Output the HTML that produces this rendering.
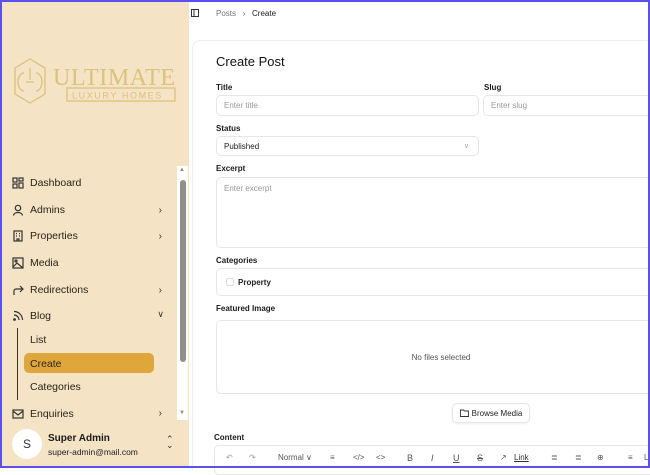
<!DOCTYPE html>
<html><head><style>
*{box-sizing:border-box;margin:0;padding:0}
body{width:650px;height:468px;overflow:hidden;font-family:"Liberation Sans",sans-serif;background:#fff;position:relative}
.frame{position:absolute;inset:0;border:2px solid #5b4ff0;pointer-events:none;z-index:10}
.side{position:absolute;left:0;top:0;width:189px;height:468px;background:#f4e3c5}
.item{position:absolute;left:12px;font-size:10.5px;color:#2b2418;display:flex;align-items:center;height:20px}
.item svg{margin-right:6px}
.chev{position:absolute;right:14px;font-size:10px;color:#333}
.sub{position:absolute;left:30px;font-size:10.5px;color:#2b2418}
.sb{position:absolute;left:177px;top:166px;width:11px;height:254px;background:#fff}
.thumb{position:absolute;left:180px;top:180px;width:6px;height:182px;background:#8f8f8f;border-radius:3px}
.lbl{position:absolute;font-size:8px;font-weight:bold;color:#1a1a1a}
.inp{position:absolute;border:1px solid #e6e6e6;border-radius:5px;font-size:8px;color:#999;padding-left:7px;display:flex;align-items:center}
.tb{position:absolute;top:453px;font-size:8px;color:#555}
</style></head><body>
<div class="side">
 <svg style="position:absolute;left:12px;top:56px" width="166" height="50" viewBox="0 0 166 50" fill="none" stroke="#dcc27c" stroke-width="1.3">
  <polygon points="18,3 33,12 33,38 18,47 3,38 3,12"/>
  <path d="M12,17 a6,9 0 0 0 0,18 M24,17 a6,9 0 0 1 0,18 M14,26 h8 M18,12 v12"/>
  <text x="41" y="29" font-family="Liberation Serif" font-size="24" textLength="122" fill="#dcc27c" stroke="none">ULTIMATE</text>
  <rect x="55" y="32" width="108" height="13"/>
  <text x="60" y="42.5" font-family="Liberation Sans" font-size="9" letter-spacing="1.6" fill="#dcc27c" stroke="none">LUXURY HOMES</text>
 </svg>
 <div class="item" style="top:173px"><svg width="12" height="12" viewBox="0 0 12 12" fill="none" stroke="#333" stroke-width="1.2"><rect x="1" y="1" width="4" height="4"/><rect x="7" y="1" width="4" height="3"/><rect x="1" y="7" width="4" height="4"/><rect x="7" y="6" width="4" height="5"/></svg>Dashboard</div>
 <div class="item" style="top:200px"><svg width="12" height="12" viewBox="0 0 12 12" fill="none" stroke="#333" stroke-width="1.2"><circle cx="6" cy="4" r="2.7"/><path d="M1.5,11.5 c0.5-4 8.5-4 9,0"/></svg>Admins</div>
 <div class="item" style="top:226px"><svg width="12" height="12" viewBox="0 0 12 12" fill="none" stroke="#333" stroke-width="1.2"><rect x="2" y="1" width="8" height="10"/><path d="M4,3.5h1M7,3.5h1M4,6h1M7,6h1M5,11V9h2v2"/></svg>Properties</div>
 <div class="item" style="top:253px"><svg width="12" height="12" viewBox="0 0 12 12" fill="none" stroke="#333" stroke-width="1.2"><rect x="1" y="1" width="10" height="10"/><circle cx="4" cy="4" r="1"/><path d="M1,10 l4-4 6,5"/></svg>Media</div>
 <div class="item" style="top:280px"><svg width="12" height="12" viewBox="0 0 12 12" fill="none" stroke="#333" stroke-width="1.2"><path d="M2,11V7a2,2 0 0 1 2-2h7M8,2l3,3-3,3"/></svg>Redirections</div>
 <div class="item" style="top:306px"><svg width="12" height="12" viewBox="0 0 12 12" fill="none" stroke="#333" stroke-width="1.2"><path d="M2,1.5a8.5,8.5 0 0 1 8.5,8.5M2,5a5,5 0 0 1 5,5"/><circle cx="2.5" cy="9.5" r="0.8" fill="#333"/></svg>Blog</div>
 <div class="chev" style="top:205px;right:27px">&#x203A;</div>
 <div class="chev" style="top:231px;right:27px">&#x203A;</div>
 <div class="chev" style="top:285px;right:27px">&#x203A;</div>
 <div class="chev" style="top:309px;right:25px;font-size:9px">&#x2228;</div>
 <div class="chev" style="top:408px;right:27px">&#x203A;</div>
 <div style="position:absolute;left:17px;top:328px;width:1px;height:72px;background:#3a3224"></div>
 <div class="sub" style="top:334px">List</div>
 <div style="position:absolute;left:24px;top:353px;width:130px;height:20px;background:#dfa63c;border-radius:5px"></div>
 <div class="sub" style="top:358px">Create</div>
 <div class="sub" style="top:381px">Categories</div>
 <div class="item" style="top:404px"><svg width="12" height="12" viewBox="0 0 12 12" fill="none" stroke="#333" stroke-width="1.2"><rect x="1" y="2" width="10" height="8"/><path d="M1,3l5,4 5-4"/></svg>Enquiries</div>
 <div class="sb"></div><div class="thumb"></div>
 <div style="position:absolute;left:179px;top:167px;font-size:6px;color:#888">&#9650;</div>
 <div style="position:absolute;left:179px;top:410px;font-size:6px;color:#888">&#9660;</div>
 <div style="position:absolute;left:12px;top:429px;width:30px;height:30px;border-radius:50%;background:#fff;font-size:12px;color:#333;text-align:center;line-height:30px">S</div>
 <div style="position:absolute;left:48px;top:433px;font-size:10px;font-weight:bold;color:#1a1a1a">Super Admin</div>
 <div style="position:absolute;left:48px;top:447px;font-size:8.5px;color:#222">super-admin@mail.com</div>
 <div style="position:absolute;left:166px;top:436px;font-size:9px;color:#333;line-height:6px">&#x2303;<br>&#x2304;</div>
</div>
<svg style="position:absolute;left:191px;top:9px" width="8" height="8" viewBox="0 0 8 8" fill="none" stroke="#333" stroke-width="1"><rect x="0.5" y="0.5" width="7" height="7"/><path d="M3,0.5v7"/></svg>
<div style="position:absolute;left:216px;top:9px;font-size:8px;color:#777">Posts &nbsp;&nbsp;<span style="color:#555">&#x203A;</span>&nbsp;&nbsp; <span style="color:#222">Create</span></div>
<div style="position:absolute;left:192px;top:40px;width:460px;height:430px;border-top:1px solid #eee;border-left:1px solid #eee;border-top-left-radius:8px"></div>
<div style="position:absolute;left:216px;top:54px;font-size:13px;color:#111">Create Post</div>
<div class="lbl" style="left:216px;top:83px">Title</div>
<div class="lbl" style="left:484px;top:83px">Slug</div>
<div class="inp" style="left:216px;top:95px;width:263px;height:21px">Enter title</div>
<div class="inp" style="left:483px;top:95px;width:180px;height:21px">Enter slug</div>
<div class="lbl" style="left:216px;top:124px">Status</div>
<div class="inp" style="left:216px;top:136px;width:263px;height:20px;color:#222">Published<span style="position:absolute;right:9px;color:#aaa;font-size:7px">&#x2228;</span></div>
<div class="lbl" style="left:216px;top:164px">Excerpt</div>
<div class="inp" style="left:216px;top:177px;width:450px;height:71px;align-items:flex-start;padding-top:6px">Enter excerpt</div>
<div class="lbl" style="left:216px;top:256px">Categories</div>
<div class="inp" style="left:216px;top:268px;width:450px;height:28px;color:#222;padding-left:9px"><span style="display:inline-block;width:8px;height:8px;border:1px solid #ddd;border-radius:2px;margin-right:4px"></span><b style="font-size:8px">Property</b></div>
<div class="lbl" style="left:216px;top:304px">Featured Image</div>
<div class="inp" style="left:216px;top:320px;width:450px;height:74px;justify-content:center;color:#555;padding:0">No files selected</div>
<div class="inp" style="left:452px;top:403px;width:78px;height:20px;color:#222;font-size:8px;justify-content:center;padding:0;box-shadow:0 1px 2px #eee"><svg width="9" height="8" viewBox="0 0 9 8" fill="none" stroke="#333" stroke-width="0.9" style="margin-right:3px"><path d="M0.5,1h3l1,1h4v5.5h-8z"/></svg>Browse Media</div>
<div class="lbl" style="left:214px;top:433px">Content</div>
<div class="inp" style="left:214px;top:445px;width:450px;height:30px"></div>
<span class="tb" style="left:226px;color:#999">&#x21B6;</span>
<span class="tb" style="left:249px;color:#999">&#x21B7;</span>
<span class="tb" style="left:278px">Normal &#x2228;</span>
<span class="tb" style="left:330px">&#x2261;</span>
<span class="tb" style="left:353px">&lt;/&gt;</span>
<span class="tb" style="left:376px">&lt;&gt;</span>
<span class="tb" style="left:407px;font-size:9px">B</span>
<span class="tb" style="left:431px;font-size:9px"><i>I</i></span>
<span class="tb" style="left:453px;font-size:9px"><u>U</u></span>
<span class="tb" style="left:477px;font-size:9px"><s>S</s></span>
<span class="tb" style="left:500px">&#x2197;</span>
<span class="tb" style="left:514px;color:#333"><u>Link</u></span>
<span class="tb" style="left:551px">&#x2263;</span>
<span class="tb" style="left:575px">&#x2263;</span>
<span class="tb" style="left:597px">&#x2295;</span>
<span class="tb" style="left:628px">&#x2261;</span>
<span class="tb" style="left:644px">L</span>
<div class="frame"></div>
</body></html>
